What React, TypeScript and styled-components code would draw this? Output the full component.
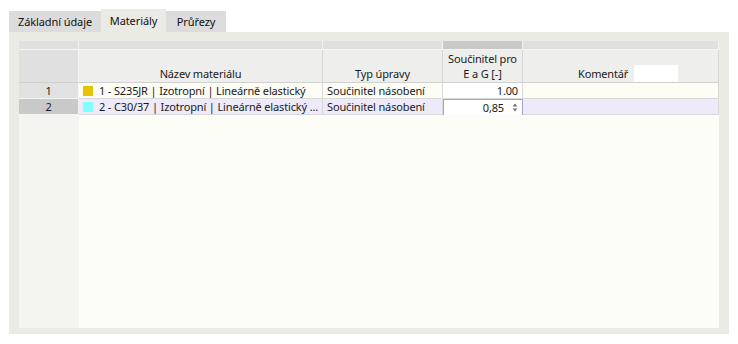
import styled, { createGlobalStyle } from "styled-components";

const GlobalStyle = createGlobalStyle`
  html, body {
    margin: 0;
    padding: 0;
    background: #ffffff;
    font-family: "Noto Sans", "Open Sans", sans-serif;
    font-size: 11px;
    color: #1a1a1a;
  }
`;

const COLS = "60px 244px 120px 80px 196px";

/**
 * outer layout
 */
const Page = styled.div`
  width: 738px;
  height: 344px;
  padding: 9px 9px 0 9px;
  box-sizing: border-box;
`;

const TabBar = styled.div`
  display: flex;
  align-items: flex-end;
  height: 23px;
`;

const Tab = styled.div<{ $active?: boolean; $w: number }>`
  width: ${(p) => p.$w}px;
  height: ${(p) => (p.$active ? "23px" : "21px")};
  line-height: ${(p) => (p.$active ? "23px" : "21px")};
  text-align: center;
  background: ${(p) => (p.$active ? "#ebebe6" : "#dcdcdc")};
  font-size: 11px;
  letter-spacing: -0.1px;
  color: #111111;
  cursor: default;
`;

const Panel = styled.div`
  width: 720px;
  height: 302px;
  background: #ebebe6;
  padding: 9px 10px 6px 10px;
  box-sizing: border-box;
`;

const Grid = styled.div`
  height: 100%;
  display: flex;
  flex-direction: column;
  background: #fdfdf8;
  letter-spacing: -0.15px;
`;

const Row = styled.div`
  display: grid;
  grid-template-columns: ${COLS};
`;

const BandCell = styled.div<{ $dark?: boolean }>`
  height: 8px;
  background: ${(p) => (p.$dark ? "#c9c9c9" : "#e0e0e0")};
  border-right: 1px solid #f4f4f2;
  border-bottom: 1px solid #f4f4f2;
`;

const HeadCell = styled.div<{ $corner?: boolean; $start?: boolean }>`
  height: 31px;
  background: ${(p) => (p.$corner ? "#e0e0e0" : "#eeeeec")};
  border-right: 1px solid ${(p) => (p.$corner ? "#f4f4f2" : "#d6d6d4")};
  border-bottom: 1px solid #d0d0ce;
  display: flex;
  align-items: flex-end;
  justify-content: ${(p) => (p.$start ? "flex-start" : "center")};
  padding-left: ${(p) => (p.$start ? "55px" : "0")};
  text-align: center;
  line-height: 15px;
  padding-bottom: 1px;
  box-sizing: content-box;
`;

const CommentBox = styled.div`
  width: 44px;
  height: 17px;
  margin-bottom: -1px;
  margin-left: 6px;
  background: #ffffff;
`;

const NumCell = styled.div<{ $selected?: boolean }>`
  height: 15px;
  line-height: 15px;
  text-align: center;
  background: ${(p) => (p.$selected ? "#c9c9c9" : "#e1e1e1")};
  border-right: 1px solid #f4f4f2;
  border-bottom: 1px solid #f4f4f2;
`;

const DataCell = styled.div<{ $bg: string; $right?: boolean }>`
  height: 15px;
  line-height: 15px;
  background: ${(p) => p.$bg};
  border-right: 1px solid #d8d8d8;
  border-bottom: 1px solid #d8d8d8;
  padding: 0 4px;
  display: flex;
  align-items: center;
  justify-content: ${(p) => (p.$right ? "flex-end" : "flex-start")};
  white-space: nowrap;
  overflow: hidden;
  box-sizing: content-box;
`;

const Swatch = styled.span<{ $color: string }>`
  display: inline-block;
  width: 10px;
  height: 10px;
  background: ${(p) => p.$color};
  margin-right: 6px;
  flex-shrink: 0;
`;

const SpinInput = styled.div`
  height: 15px;
  background: #ffffff;
  border: 1px solid #a69fde;
  border-bottom: none;
  display: flex;
  align-items: center;
  justify-content: flex-end;
  padding-right: 4px;
  gap: 8px;
  box-sizing: content-box;
`;

const Spin = styled.svg`
  width: 6px;
  height: 9px;
`;

const Filler = styled.div`
  flex: 1;
  display: grid;
  grid-template-columns: 60px 1fr;
`;

const FillerNum = styled.div`
  background: #f4f5f0;
`;

type Material = {
  no: number;
  color: string;
  name: string;
  type: string;
  factor: string;
};

const materials: Material[] = [
  {
    no: 1,
    color: "#e6c400",
    name: "1 - S235JR | Izotropní | Lineárně elastický",
    type: "Součinitel násobení",
    factor: "1.00",
  },
  {
    no: 2,
    color: "#80ffff",
    name: "2 - C30/37 | Izotropní | Lineárně elastický ...",
    type: "Součinitel násobení",
    factor: "0,85",
  },
];

const App = () => {
  return (
    <Page>
      <GlobalStyle />
      <TabBar>
        <Tab $w={92}>Základní údaje</Tab>
        <Tab $w={65} $active>
          Materiály
        </Tab>
        <Tab $w={60}>Průřezy</Tab>
      </TabBar>
      <Panel>
        <Grid>
          <Row>
            <BandCell />
            <BandCell />
            <BandCell />
            <BandCell $dark />
            <BandCell />
          </Row>
          <Row>
            <HeadCell $corner />
            <HeadCell>Název materiálu</HeadCell>
            <HeadCell>Typ úpravy</HeadCell>
            <HeadCell>
              Součinitel pro
              <br />E a G [-]
            </HeadCell>
            <HeadCell $start>
              <span>Komentář</span>
              <CommentBox />
            </HeadCell>
          </Row>
          {materials.map((m, i) => {
            const sel = i === 1;
            const bg = sel ? "#eeeafa" : "#fdfdf5";
            return (
              <Row key={`M-${m.no}`}>
                <NumCell $selected={sel}>{m.no}</NumCell>
                <DataCell $bg={bg}>
                  <Swatch $color={m.color} />
                  {m.name}
                </DataCell>
                <DataCell $bg={bg}>{m.type}</DataCell>
                {sel ? (
                  <SpinInput>
                    {m.factor}
                    <Spin viewBox="0 0 6 9">
                      <path d="M3 0.5 L5.5 3.5 H0.5 Z" fill="#777" />
                      <path d="M3 8.5 L5.5 5.5 H0.5 Z" fill="#777" />
                    </Spin>
                  </SpinInput>
                ) : (
                  <DataCell $bg="#ffffff" $right>
                    {m.factor}
                  </DataCell>
                )}
                <DataCell $bg={bg} />
              </Row>
            );
          })}
          <Filler>
            <FillerNum />
            <div />
          </Filler>
        </Grid>
      </Panel>
    </Page>
  );
};

export default App;
